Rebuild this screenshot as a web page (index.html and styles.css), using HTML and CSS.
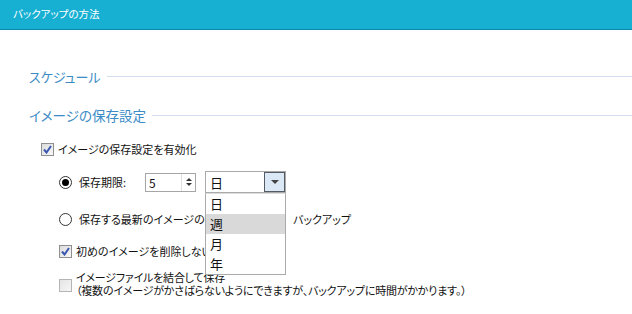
FILE: index.html
```html
<html>
  <head>
    <meta charset="utf-8">
    <link rel="stylesheet" href="styles.css">
  </head>
  <body>
    <div class="header">バックアップの方法</div>
    <div class="content">
      <div class="legend legend--first">
        <span class="legend__text legend__text--short">スケジュール</span>
        <span class="legend__line"></span>
      </div>
      <div class="legend">
        <span class="legend__text">イメージの保存設定</span>
        <span class="legend__line"></span>
      </div>

      <div class="row row--top">
        <span class="check check--on">
          <svg width="9" height="9" viewBox="0 0 9 9"><path d="M1 4.5 L3.5 7.5 L8 1" fill="none" stroke="#3a57b0" stroke-width="2"/></svg>
        </span>
        <span class="label">イメージの保存設定を有効化</span>
      </div>

      <div class="row row--period">
        <span class="radio radio--on"></span>
        <span class="label label--radio label--period">保存期限:</span>
        <span class="spin">
          <span class="spin__value">5</span>
          <span class="spin__btns">
            <span class="spin__up"></span>
            <span class="spin__down"></span>
          </span>
        </span>
        <span class="select">
          <span class="select__value">日</span>
          <span class="select__btn"><span class="select__arrow"></span></span>
          <div class="dropdown">
            <div class="dropdown__item">日</div>
            <div class="dropdown__item dropdown__item--hover">週</div>
            <div class="dropdown__item">月</div>
            <div class="dropdown__item">年</div>
          </div>
        </span>
      </div>

      <div class="row row--count">
        <span class="radio"></span>
        <span class="label label--radio label--count">保存する最新のイメージの数</span>
        <span class="label">バックアップ</span>
      </div>

      <div class="row row--sub">
        <span class="check check--on">
          <svg width="9" height="9" viewBox="0 0 9 9"><path d="M1 4.5 L3.5 7.5 L8 1" fill="none" stroke="#3a57b0" stroke-width="2"/></svg>
        </span>
        <span class="label">初めのイメージを削除しない</span>
      </div>

      <div class="row row--merge">
        <span class="check check--off"></span>
        <span class="label label--two">イメージファイルを結合して保存<br>（複数のイメージがかさばらないようにできますが、バックアップに時間がかかります。）</span>
      </div>
    </div>
  </body>
</html>
```

FILE: styles.css
```css
body {
	margin: 0;
	background-color: #fff;
	font-family: "Noto Sans CJK JP", "DejaVu Sans", sans-serif;
	font-size: 11px;
	font-feature-settings: "palt";
	color: #111;
	overflow: hidden;
}

.header {
	height: 29px;
	line-height: 28px;
	padding-left: 13px;
	background-color: #17b0d3;
	border-bottom: 1px solid #0d8aa3;
	color: #fff;
	font-size: 10.5px;
}

.content {
	padding-left: 29px;
}

.legend {
	display: flex;
	align-items: center;
	height: 20px;
	margin-top: 19px;
}

.legend--first {
	margin-top: 36px;
}

.legend__text {
	font-size: 13.5px;
	color: #3b8bc6;
	padding-right: 6px;
	white-space: nowrap;
}

.legend__text--short {
	font-size: 13px;
}

.legend__line {
	flex: 1;
	height: 1px;
	background-color: #d3ddef;
}

.row {
	display: flex;
	align-items: center;
	height: 16px;
	margin-left: 30px;
}

.row--top {
	margin-left: 12px;
	margin-top: 16px;
}

.row--period {
	height: 22px;
	margin-top: 14px;
}

.row--count {
	margin-top: 18px;
}

.row--sub {
	margin-top: 16px;
}

.row--merge {
	height: 26px;
	margin-top: 13px;
}

.label {
	white-space: nowrap;
	line-height: 16px;
}

.label--radio {
	margin-left: 7px;
}

.label--period {
	width: 56px;
}

.label--count {
	width: 214px;
}

.label--two {
	line-height: 13px;
	margin-top: -2px;
	letter-spacing: -0.2px;
}

.check {
	box-sizing: border-box;
	width: 13px;
	height: 13px;
	border: 1px solid #8e8f8f;
	background: linear-gradient(135deg, #dcdcdc, #f8f8f8);
	margin-right: 4px;
	display: flex;
	align-items: center;
	justify-content: center;
}

.check--off {
	border-color: #b5b5b5;
	background: linear-gradient(135deg, #e4e4e4, #f6f6f6);
}

.radio {
	box-sizing: border-box;
	width: 13px;
	height: 13px;
	border: 1px solid #333;
	border-radius: 50%;
	background-color: #fff;
	position: relative;
}

.radio--on::after {
	content: "";
	position: absolute;
	left: 2px;
	top: 2px;
	width: 7px;
	height: 7px;
	border-radius: 50%;
	background-color: #000;
}

.spin {
	box-sizing: border-box;
	display: flex;
	width: 51px;
	height: 19px;
	margin-left: 10px;
	border: 1px solid #a6a6a6;
	background-color: #fff;
}

.spin__value {
	flex: 1;
	padding-left: 3px;
	line-height: 17px;
	font-size: 12px;
	border-right: 1px solid #e0e0e0;
}

.spin__btns {
	width: 13px;
	display: flex;
	flex-direction: column;
	align-items: center;
	justify-content: center;
	gap: 2px;
}

.spin__up {
	width: 0;
	height: 0;
	border-left: 3px solid transparent;
	border-right: 3px solid transparent;
	border-bottom: 3px solid #333;
}

.spin__down {
	width: 0;
	height: 0;
	border-left: 3px solid transparent;
	border-right: 3px solid transparent;
	border-top: 3px solid #333;
}

.select {
	box-sizing: border-box;
	position: relative;
	display: flex;
	align-items: center;
	width: 81px;
	height: 22px;
	margin-left: 9px;
	border: 1px solid #aaa;
	background-color: #fff;
}

.select__value {
	flex: 1;
	padding-left: 4px;
	font-size: 13px;
}

.select__btn {
	box-sizing: border-box;
	width: 21px;
	height: 20px;
	border: 1px solid #555b63;
	background-color: #dbe9f7;
	display: flex;
	align-items: center;
	justify-content: center;
}

.select__arrow {
	width: 0;
	height: 0;
	border-left: 4px solid transparent;
	border-right: 4px solid transparent;
	border-top: 4px solid #444;
}

.dropdown {
	box-sizing: border-box;
	position: absolute;
	left: -1px;
	top: 21px;
	width: 81px;
	border: 1px solid #aaa;
	border-top-color: #ddd;
	background-color: #fff;
	z-index: 2;
}

.dropdown__item {
	height: 20px;
	line-height: 20px;
	padding-left: 4px;
	font-size: 13px;
}

.dropdown__item--hover {
	background-color: #d9d9d9;
}
```
